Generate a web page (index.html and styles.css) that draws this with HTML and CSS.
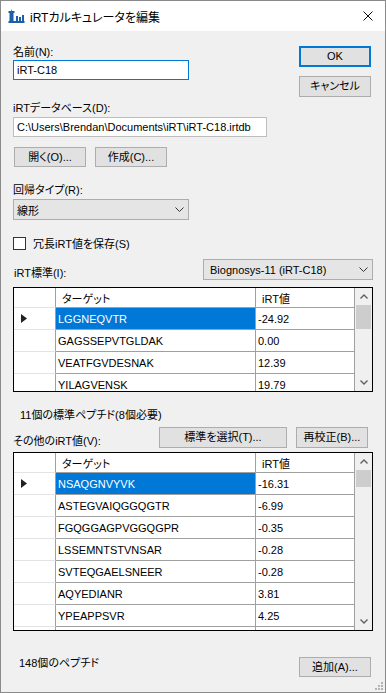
FILE: index.html
```html
<!DOCTYPE html>
<html lang="ja">
<head>
    <meta charset="UTF-8">
    <title>iRTカルキュレータを編集</title>
    <link rel="stylesheet" href="styles.css">
</head>
<body>
<div class="window">
    <div class="titlebar">
        <svg class="app-icon" width="17" height="16" viewBox="0 0 17 16">
            <path d="M3.5 1 L4.5 5 L5.5 5 L5.5 13 L1.5 13 L1.5 5 L2.5 5 Z" fill="#1d5ea8"/>
            <rect x="0.5" y="3" width="6" height="2" fill="#1d5ea8"/>
            <rect x="8" y="8" width="2" height="5" fill="#1d5ea8"/>
            <rect x="11" y="9" width="2" height="4" fill="#1d5ea8"/>
            <rect x="14" y="7" width="2" height="6" fill="#1d5ea8"/>
            <rect x="0.5" y="13" width="16" height="2" fill="#1d5ea8"/>
        </svg>
        <span class="title">iRTカルキュレータを編集</span>
        <svg class="close" width="10" height="10" viewBox="0 0 10 10">
            <path d="M0.5 0.5 L9.5 9.5 M9.5 0.5 L0.5 9.5" stroke="#111" stroke-width="1"/>
        </svg>
    </div>
    <div class="content">
        <div class="top-row">
            <div class="name-col">
                <div class="label">名前(N):</div>
                <div class="textbox focus">iRT-C18</div>
            </div>
            <div class="side-buttons">
                <div class="btn default">OK</div>
                <div class="btn">キャンセル</div>
            </div>
        </div>
        <div class="label db-label">iRTデータベース(D):</div>
        <div class="textbox db-path">C:\Users\Brendan\Documents\iRT\iRT-C18.irtdb</div>
        <div class="file-buttons">
            <div class="btn small">開く(O)...</div>
            <div class="btn small">作成(C)...</div>
        </div>
        <div class="label reg-label">回帰タイプ(R):</div>
        <div class="combo">
            <span>線形</span>
            <svg width="9" height="5" viewBox="0 0 9 5"><path d="M0.5 0.5 L4.5 4.5 L8.5 0.5" fill="none" stroke="#333" stroke-width="1"/></svg>
        </div>
        <div class="check-row">
            <span class="checkbox"></span>
            <span>冗長iRT値を保存(S)</span>
        </div>
        <div class="std-row">
            <div class="label">iRT標準(I):</div>
            <div class="combo std-combo">
                <span>Biognosys-11 (iRT-C18)</span>
                <svg width="9" height="5" viewBox="0 0 9 5"><path d="M0.5 0.5 L4.5 4.5 L8.5 0.5" fill="none" stroke="#333" stroke-width="1"/></svg>
            </div>
        </div>
        <div class="grid grid-std">
            <div class="cells">
                <div class="row head">
                    <div class="rh"></div>
                    <div class="target">ターゲット</div>
                    <div class="value">iRT値</div>
                </div>
                <div class="row">
                    <div class="rh"><svg width="6" height="9" viewBox="0 0 6 9"><path d="M0 0 L6 4.5 L0 9 Z" fill="#222"/></svg></div>
                    <div class="target selected">LGGNEQVTR</div>
                    <div class="value">-24.92</div>
                </div>
                <div class="row">
                    <div class="rh"></div>
                    <div class="target">GAGSSEPVTGLDAK</div>
                    <div class="value">0.00</div>
                </div>
                <div class="row">
                    <div class="rh"></div>
                    <div class="target">VEATFGVDESNAK</div>
                    <div class="value">12.39</div>
                </div>
                <div class="row">
                    <div class="rh"></div>
                    <div class="target">YILAGVENSK</div>
                    <div class="value">19.79</div>
                </div>
            </div>
            <div class="scrollbar">
                <div class="sb-btn"><svg width="8" height="5" viewBox="0 0 8 5"><path d="M0.5 4.5 L4 1 L7.5 4.5" fill="none" stroke="#606060" stroke-width="1.4"/></svg></div>
                <div class="thumb thumb-std"></div>
                <div class="sb-space"></div>
                <div class="sb-btn"><svg width="8" height="5" viewBox="0 0 8 5"><path d="M0.5 0.5 L4 4 L7.5 0.5" fill="none" stroke="#606060" stroke-width="1.4"/></svg></div>
            </div>
        </div>
        <div class="label note">11個の標準ペプチド(8個必要)</div>
        <div class="other-row">
            <div class="label">その他のiRT値(V):</div>
            <div class="other-buttons">
                <div class="btn wide">標準を選択(T)...</div>
                <div class="btn">再校正(B)...</div>
            </div>
        </div>
        <div class="grid grid-other">
            <div class="cells">
                <div class="row head">
                    <div class="rh"></div>
                    <div class="target">ターゲット</div>
                    <div class="value">iRT値</div>
                </div>
                <div class="row">
                    <div class="rh"><svg width="6" height="9" viewBox="0 0 6 9"><path d="M0 0 L6 4.5 L0 9 Z" fill="#222"/></svg></div>
                    <div class="target selected">NSAQGNVYVK</div>
                    <div class="value">-16.31</div>
                </div>
                <div class="row">
                    <div class="rh"></div>
                    <div class="target">ASTEGVAIQGGQGTR</div>
                    <div class="value">-6.99</div>
                </div>
                <div class="row">
                    <div class="rh"></div>
                    <div class="target">FGQGGAGPVGGQGPR</div>
                    <div class="value">-0.35</div>
                </div>
                <div class="row">
                    <div class="rh"></div>
                    <div class="target">LSSEMNTSTVNSAR</div>
                    <div class="value">-0.28</div>
                </div>
                <div class="row">
                    <div class="rh"></div>
                    <div class="target">SVTEQGAELSNEER</div>
                    <div class="value">-0.28</div>
                </div>
                <div class="row">
                    <div class="rh"></div>
                    <div class="target">AQYEDIANR</div>
                    <div class="value">3.81</div>
                </div>
                <div class="row">
                    <div class="rh"></div>
                    <div class="target">YPEAPPSVR</div>
                    <div class="value">4.25</div>
                </div>
                <div class="row">
                    <div class="rh"></div>
                    <div class="target"></div>
                    <div class="value"></div>
                </div>
            </div>
            <div class="scrollbar">
                <div class="sb-btn"><svg width="8" height="5" viewBox="0 0 8 5"><path d="M0.5 4.5 L4 1 L7.5 4.5" fill="none" stroke="#606060" stroke-width="1.4"/></svg></div>
                <div class="thumb thumb-other"></div>
                <div class="sb-space"></div>
                <div class="sb-btn"><svg width="8" height="5" viewBox="0 0 8 5"><path d="M0.5 0.5 L4 4 L7.5 0.5" fill="none" stroke="#606060" stroke-width="1.4"/></svg></div>
            </div>
        </div>
        <div class="footer">
            <div class="label count">148個のペプチド</div>
            <div class="btn small">追加(A)...</div>
        </div>
    </div>
    <svg class="grip" width="9" height="9" viewBox="0 0 9 9">
        <rect x="7" y="1" width="2" height="2" fill="#b4b4b4"/>
        <rect x="4" y="4" width="2" height="2" fill="#b4b4b4"/>
        <rect x="7" y="4" width="2" height="2" fill="#b4b4b4"/>
        <rect x="1" y="7" width="2" height="2" fill="#b4b4b4"/>
        <rect x="4" y="7" width="2" height="2" fill="#b4b4b4"/>
        <rect x="7" y="7" width="2" height="2" fill="#b4b4b4"/>
    </svg>
</div>
</body>
</html>
```

FILE: styles.css
```css
* {
    box-sizing: border-box;
}

html, body {
    margin: 0;
    padding: 0;
}

body {
    width: 386px;
    height: 693px;
    overflow: hidden;
    font-family: "Liberation Sans", "Noto Sans CJK JP", sans-serif;
    font-size: 11px;
    font-feature-settings: "palt";
    color: #000000;
}

.window {
    position: relative;
    width: 386px;
    height: 693px;
    border: 1px solid #8a8a8a;
    background-color: #f0f0f0;
    display: flex;
    flex-direction: column;
}

.titlebar {
    height: 30px;
    flex-shrink: 0;
    background-color: #ffffff;
    display: flex;
    align-items: center;
    padding-left: 7px;
}

.app-icon {
    margin-right: 5px;
    margin-top: -1px;
}

.title {
    flex: 1;
    font-size: 12px;
    white-space: nowrap;
}

.close {
    margin-right: 12px;
}

.content {
    flex: 1;
    display: flex;
    flex-direction: column;
    padding: 14px 12px 0 12px;
}

.label {
    height: 14px;
    line-height: 14px;
    white-space: nowrap;
}

.top-row {
    display: flex;
    justify-content: space-between;
}

.name-col {
    width: 176px;
}

.textbox {
    height: 20px;
    line-height: 18px;
    padding-left: 3px;
    background-color: #ffffff;
    border: 1px solid #bdbdbd;
    white-space: nowrap;
    overflow: hidden;
}

.textbox.focus {
    margin-top: 1px;
    border-color: #0078d7;
}

.side-buttons {
    display: flex;
    flex-direction: column;
    gap: 9px;
    margin-top: 1px;
    margin-right: 2px;
}

.btn {
    width: 72px;
    height: 21px;
    line-height: 19px;
    text-align: center;
    background-color: #e1e1e1;
    border: 1px solid #adadad;
    white-space: nowrap;
}

.btn.default {
    border: 2px solid #0078d7;
    line-height: 17px;
}

.btn.small {
    height: 20px;
    line-height: 18px;
}

.btn.wide {
    width: 128px;
}

.db-label {
    margin-top: 4px;
}

.db-path {
    width: 254px;
    margin-top: 2px;
}

.file-buttons {
    display: flex;
    gap: 9px;
    margin-top: 10px;
    margin-left: 1px;
}

.reg-label {
    margin-top: 16px;
}

.combo {
    width: 176px;
    height: 21px;
    margin-top: 2px;
    padding: 0 4px 0 3px;
    display: flex;
    align-items: center;
    justify-content: space-between;
    background-color: #e5e5e5;
    border: 1px solid #adadad;
    white-space: nowrap;
}

.check-row {
    height: 14px;
    margin-top: 16px;
    display: flex;
    align-items: center;
    white-space: nowrap;
}

.checkbox {
    width: 13px;
    height: 13px;
    margin-right: 7px;
    background-color: #ffffff;
    border: 1px solid #333333;
}

.std-row {
    margin-top: 9px;
    display: flex;
    justify-content: space-between;
    align-items: flex-end;
}

.std-row .label {
    padding-left: 1px;
}

.std-combo {
    width: 170px;
    margin-top: 0;
    padding-left: 6px;
}

.grid {
    display: flex;
    margin-top: 7px;
    background-color: #ffffff;
    border: 1px solid #000000;
    overflow: hidden;
}

.grid-std {
    height: 105px;
}

.grid-other {
    height: 179px;
    margin-top: 4px;
}

.cells {
    flex: 1;
    display: flex;
    flex-direction: column;
    overflow: hidden;
}

.row {
    display: flex;
    height: 22px;
    flex-shrink: 0;
}

.row.head {
    height: 20px;
}

.row > div {
    height: 100%;
    display: flex;
    align-items: center;
    white-space: nowrap;
    border-right: 1px solid #a0a0a0;
    border-bottom: 1px solid #a0a0a0;
}

.row > .rh {
    width: 42px;
    padding-left: 7px;
    border-bottom-color: #e3e3e3;
}

.row > .target {
    width: 200px;
    padding-left: 2px;
}

.row > .value {
    width: 99px;
    padding-left: 2px;
}

.row.head > .target,
.row.head > .value {
    padding-left: 6px;
}

.row > .selected {
    background-color: #0078d7;
    color: #ffffff;
}

.scrollbar {
    width: 17px;
    display: flex;
    flex-direction: column;
    background-color: #f0f0f0;
}

.sb-btn {
    height: 17px;
    flex-shrink: 0;
    display: flex;
    align-items: center;
    justify-content: center;
}

.thumb {
    margin: 0 1px;
    background-color: #cdcdcd;
    flex-shrink: 0;
}

.thumb-std {
    height: 24px;
}

.thumb-other {
    height: 17px;
}

.sb-space {
    flex: 1;
}

.note {
    margin-top: 16px;
    padding-left: 7px;
}

.other-row {
    margin-top: 5px;
    display: flex;
    align-items: flex-end;
}

.other-buttons {
    display: flex;
    gap: 9px;
    margin-left: auto;
    margin-right: 5px;
}

.footer {
    margin-top: 26px;
    display: flex;
    justify-content: space-between;
    align-items: flex-start;
}

.footer .btn {
    margin-right: 2px;
}

.count {
    padding-left: 6px;
    margin-top: -1px;
}

.grip {
    position: absolute;
    right: 2px;
    bottom: 2px;
}
```
